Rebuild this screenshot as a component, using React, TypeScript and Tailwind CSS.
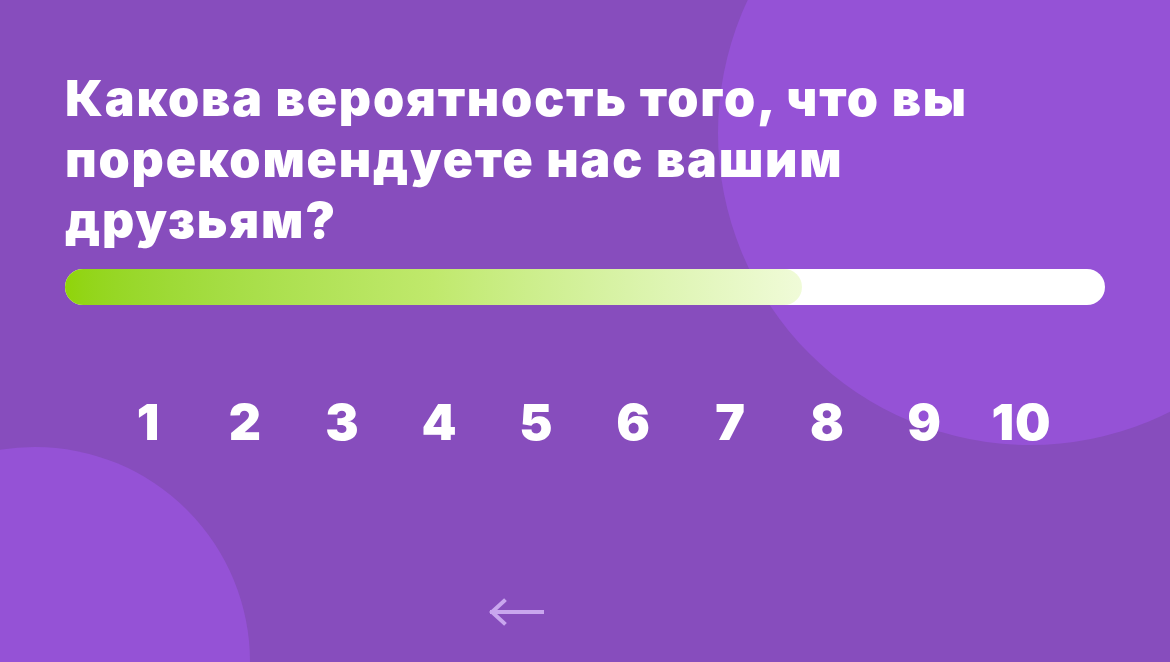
const scores = [1, 2, 3, 4, 5, 6, 7, 8, 9, 10];

export default function App() {
    return (
        <div className="relative h-[662px] w-[1170px] overflow-hidden bg-[#874dbd] font-['Inter','Open_Sans',sans-serif] text-white">
            {/* background blobs */}
            <div className="absolute left-[718px] top-[-179px] h-[624px] w-[624px] rounded-full bg-[#9552d6]" />
            <div className="absolute left-[-180px] top-[447px] h-[430px] w-[430px] rounded-full bg-[#9552d6]" />

            <div className="relative flex flex-col px-[65px] pt-[68px]">
                <h1 className="max-w-[1000px] text-[50px] font-black leading-[61px] tracking-[1.8px]">
                    Какова вероятность того, что вы порекомендуете нас вашим друзьям?
                </h1>

                <div className="mt-[18px] h-[36px] w-[1040px] rounded-full bg-white">
                    <div className="h-full w-[737px] rounded-full bg-gradient-to-r from-[#90d408] via-[#c0e96c] via-50% to-[#f0fbd8]" />
                </div>

                <div className="mt-[92px] grid grid-cols-10 px-[35px]">
                    {scores.map((n) => (
                        <button
                            key={n}
                            className="text-center text-[50px] font-black leading-[50px] tracking-[1px]"
                        >
                            {n}
                        </button>
                    ))}
                </div>

                <div className="mt-[149px] flex justify-center pr-[138px]">
                    <svg width="60" height="32" viewBox="0 0 60 32" fill="none" stroke="#c9a6ee" strokeWidth="4" strokeLinecap="square">
                        <path d="M56 16H6" />
                        <path d="M18 5L6 16L18 27" />
                    </svg>
                </div>
            </div>
        </div>
    );
}
